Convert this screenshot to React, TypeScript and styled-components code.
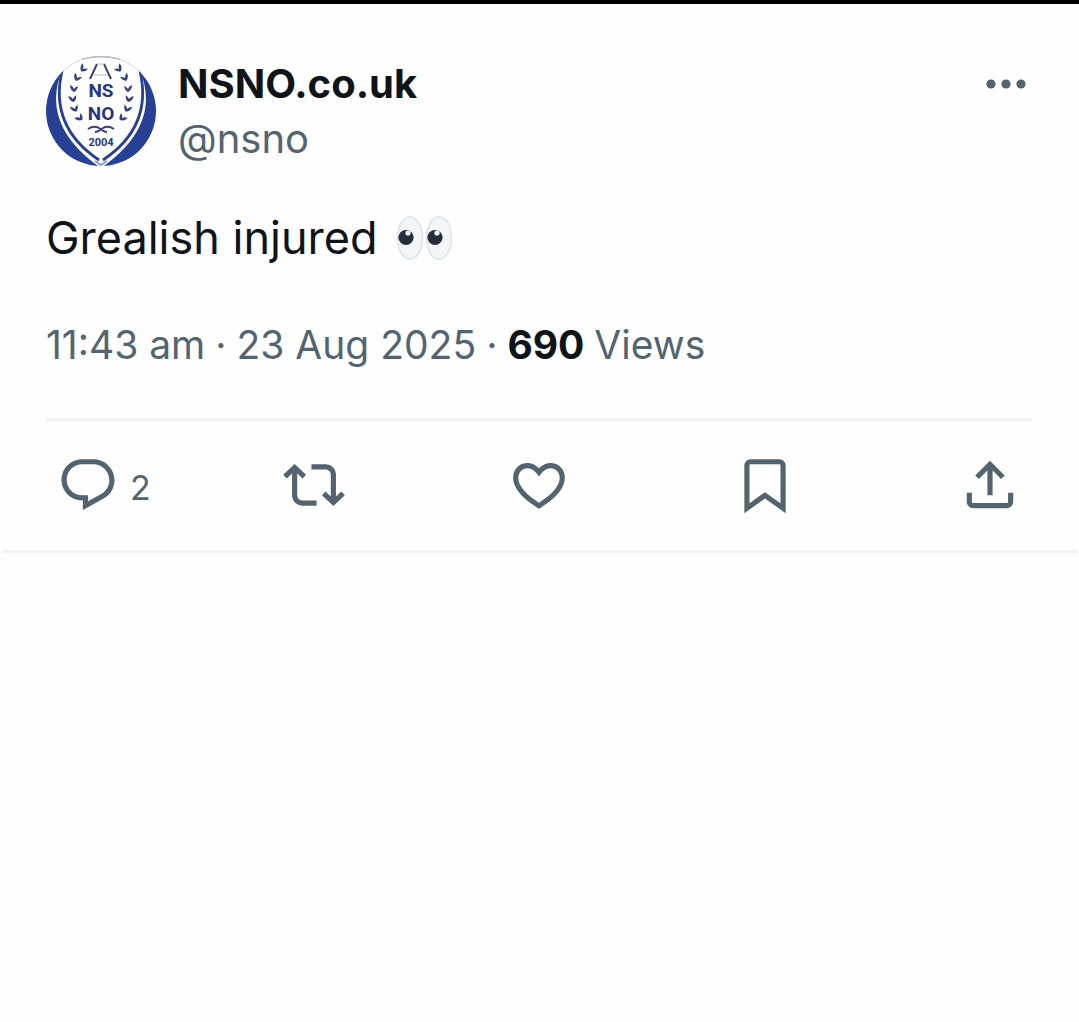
import React from 'react';
import styled, { createGlobalStyle } from 'styled-components';

const GlobalStyle = createGlobalStyle`
  *, *::before, *::after { box-sizing: border-box; }
  body {
    margin: 0;
    background: #fefefe;
    color: #0f1419;
    font-family: Inter, Roboto, 'Liberation Sans', sans-serif;
  }
`;

const Page = styled.main`
  border-top: 4px solid #000;
`;

const Post = styled.article`
  margin: 0 2px;
  padding: 52px 45px 0 44px;
  border-bottom: 3px solid #f1f2f3;
`;

const Header = styled.header`
  display: flex;
  align-items: flex-start;
  gap: 22px;
`;

const Avatar = styled.svg`
  flex: none;
  width: 110px;
  height: 110px;
`;

const Author = styled.div`
  flex: 1;
  display: flex;
  flex-direction: column;
  align-items: flex-start;
`;

const AuthorLink = styled.a<{ $strong?: boolean }>`
  color: ${(p) => (p.$strong ? '#0f1419' : '#536471')};
  font-size: 40px;
  font-weight: ${(p) => (p.$strong ? 700 : 400)};
  line-height: 55px;
  text-decoration: none;
`;

const IconButton = styled.button<{ $size: number }>`
  display: flex;
  align-items: center;
  gap: 11px;
  width: ${(p) => p.$size}px;
  height: ${(p) => p.$size}px;
  padding: 0;
  border: 0;
  background: none;
  color: #536471;
  font: inherit;
  font-size: 34px;
  cursor: pointer;

  svg {
    flex: none;
    width: ${(p) => p.$size}px;
    height: ${(p) => p.$size}px;
    fill: currentColor;
  }
`;

const Count = styled.span`
  padding-top: 4px;
`;

const Body = styled.p`
  display: flex;
  align-items: center;
  gap: 18px;
  margin: 42px 0 0;
  font-size: 45px;
  line-height: 60px;
`;

const Emoji = styled.svg`
  width: 56px;
  height: 56px;
`;

const Meta = styled.div`
  display: flex;
  flex-wrap: wrap;
  column-gap: 10px;
  margin-top: 48px;
  color: #536471;
  font-size: 39px;
  line-height: 58px;

  strong {
    color: #0f1419;
    font-weight: 700;
  }
`;

const Actions = styled.footer`
  display: flex;
  justify-content: space-between;
  margin-top: 44px;
  padding: 33px 11px 34px;
  border-top: 3px solid #f1f2f3;
`;

const actions = [
  {
    label: 'Reply',
    count: 2,
    path: 'M1.751 10c0-4.42 3.584-8 8.005-8h4.366c4.49 0 8.129 3.64 8.129 8.13 0 2.96-1.607 5.68-4.196 7.11l-8.054 4.46v-3.69h-.067c-4.49.1-8.183-3.51-8.183-8.01zm8.005-6c-3.317 0-6.005 2.69-6.005 6 0 3.37 2.77 6.08 6.138 6.01l.351-.01h1.761v2.3l5.087-2.81c1.951-1.08 3.163-3.13 3.163-5.36 0-3.39-2.744-6.13-6.129-6.13H9.756z',
  },
  {
    label: 'Repost',
    path: 'M4.5 3.88l4.432 4.14-1.364 1.46L5.5 7.55V16c0 1.1.896 2 2 2H13v2H7.5c-2.209 0-4-1.79-4-4V7.55L1.432 9.48.068 8.02 4.5 3.88zM16.5 6H11V4h5.5c2.209 0 4 1.79 4 4v8.45l2.068-1.93 1.364 1.46-4.432 4.14-4.432-4.14 1.364-1.46 2.068 1.93V8c0-1.1-.896-2-2-2z',
  },
  {
    label: 'Like',
    path: 'M16.697 5.5c-1.222-.06-2.679.51-3.89 2.16l-.805 1.09-.806-1.09C9.984 6.01 8.526 5.44 7.304 5.5c-1.243.07-2.349.78-2.91 1.91-.552 1.12-.633 2.78.479 4.82 1.074 1.97 3.257 4.27 7.129 6.61 3.87-2.34 6.052-4.64 7.126-6.61 1.111-2.04 1.03-3.7.477-4.82-.561-1.13-1.666-1.84-2.908-1.91zm4.187 7.69c-1.351 2.48-4.001 5.12-8.379 7.67l-.503.3-.504-.3c-4.379-2.55-7.029-5.19-8.382-7.67-1.36-2.5-1.41-4.86-.514-6.67.887-1.79 2.647-2.91 4.601-3.01 1.651-.09 3.368.56 4.798 2.01 1.429-1.45 3.146-2.1 4.796-2.01 1.954.1 3.714 1.22 4.601 3.01.896 1.81.846 4.17-.514 6.67z',
  },
  {
    label: 'Bookmark',
    path: 'M4 4.5C4 3.12 5.119 2 6.5 2h11C18.881 2 20 3.12 20 4.5v18.44l-8-5.71-8 5.71V4.5zM6.5 4c-.276 0-.5.22-.5.5v14.56l6-4.29 6 4.29V4.5c0-.28-.224-.5-.5-.5h-11z',
  },
  {
    label: 'Share',
    path: 'M12 2.59l5.7 5.7-1.41 1.42L13 6.41V16h-2V6.41l-3.3 3.3-1.41-1.42L12 2.59zM21 15l-.02 3.51c0 1.38-1.12 2.49-2.5 2.49H5.5C4.11 21 3 19.88 3 18.5V15h2v3.5c0 .28.22.5.5.5h12.98c.28 0 .5-.22.5-.5L19 15h2z',
  },
];

// Leaves on the right-hand branch of the laurel: x, y, rotation in degrees.
const leaves = [
  [73, 13, -40],
  [79, 22, -25],
  [82, 33, 0],
  [83, 43, 12],
  [81, 53, 25],
  [76, 62, 45],
];

function Branch() {
  return (
    <g fill="#35427c">
      {leaves.map(([x, y, angle]) => (
        <path key={y} d="M-4-3Q-1-2 0 0Q1-3 4-4Q4 1 0 3Q-3 2-4-3Z" transform={`translate(${x} ${y}) rotate(${angle})`} />
      ))}
    </g>
  );
}

function Crest() {
  return (
    <Avatar viewBox="0 0 110 110" role="img" aria-label="NSNO crest">
      <defs>
        <clipPath id="round">
          <circle cx="55" cy="55" r="55" />
        </clipPath>
      </defs>
      <g clipPath="url(#round)">
        <rect width="110" height="110" fill="#273f95" />
        <path d="M20-4L17 12C4 42 6 76 52 110H58C104 76 106 42 93 12L90-4Z" fill="#fff" />
        <path d="M16 15C9 45 14 78 53 104M94 15C101 45 96 78 57 104" fill="none" stroke="#273f95" strokeWidth="2.800" />
        <path d="M49 105L55 109L61 105" fill="none" stroke="#8f9bc8" strokeWidth="2" />
        <path d="M36 3Q55-2 74 3" fill="none" stroke="#b4b6be" strokeWidth="2" />
        <path d="M51 8L44 23M58 8L65 23" fill="none" stroke="#3c4569" strokeWidth="2" />
        <path d="M51 8H58M48 19H62" fill="none" stroke="#b9bcc8" strokeWidth="1" />
        <Branch />
        <g transform="translate(110 0) scale(-1 1)">
          <Branch />
        </g>
        <path d="M42 73Q48 69 53 72Q58 76 61 76M68 73Q62 69 57 72Q52 76 49 76" fill="none" stroke="#35427c" strokeWidth="2" />
        <g fill="#24377f" fontFamily="Roboto, sans-serif" fontWeight="700" textAnchor="middle">
          <text x="55" y="41" fontSize="19">NS</text>
          <text x="55" y="64" fontSize="19">NO</text>
          <text x="55" y="90" fontSize="11">2004</text>
        </g>
      </g>
    </Avatar>
  );
}

function Eyes() {
  return (
    <Emoji viewBox="0 0 56 56" role="img" aria-label="eyes">
      {[14, 43].map((x) => (
        <g key={x}>
          <ellipse cx={x} cy="28" rx="12.500" ry="21.200" fill="#f2f6f9" stroke="#e1e6ec" strokeWidth="1.800" />
          <circle cx={x - 4} cy="27.500" r="7.600" fill="#252f3a" />
          <circle cx={x - 2} cy="23" r="2.600" fill="#f5f8fa" />
        </g>
      ))}
    </Emoji>
  );
}

export default function App() {
  return (
    <>
      <GlobalStyle />
      <Page>
        <Post>
          <Header>
            <Crest />
            <Author>
              <AuthorLink $strong href="#profile">NSNO.co.uk</AuthorLink>
              <AuthorLink href="#profile">@nsno</AuthorLink>
            </Author>
            <IconButton $size={56} aria-label="More">
              <svg viewBox="0 0 56 56">
                <circle cx="15" cy="28" r="4.600" />
                <circle cx="30" cy="28" r="4.600" />
                <circle cx="45" cy="28" r="4.600" />
              </svg>
            </IconButton>
          </Header>
          <Body>
            Grealish injured
            <Eyes />
          </Body>
          <Meta>
            <span>11:43 am</span>
            <span>·</span>
            <span>23 Aug 2025</span>
            <span>·</span>
            <strong>690</strong>
            <span>Views</span>
          </Meta>
          <Actions>
            {actions.map(({ label, count, path }) => (
              <IconButton key={label} $size={62} aria-label={label}>
                <svg viewBox="0 0 24 24">
                  <path d={path} />
                </svg>
                {count && <Count>{count}</Count>}
              </IconButton>
            ))}
          </Actions>
        </Post>
      </Page>
    </>
  );
}
